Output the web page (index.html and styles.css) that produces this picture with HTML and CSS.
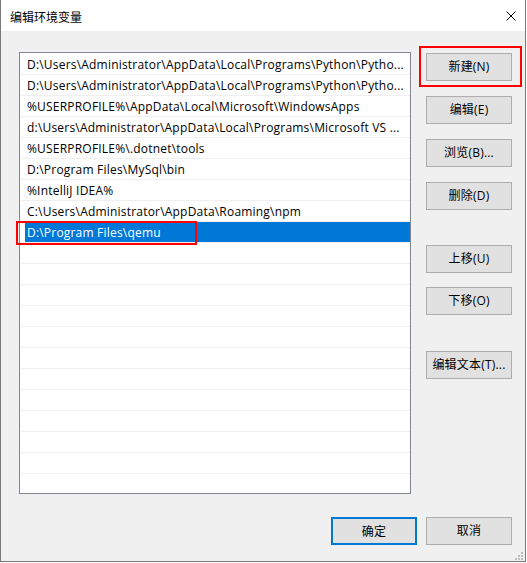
FILE: index.html
```html
<!DOCTYPE html>
<html lang="zh-CN">
<head>
<meta charset="utf-8">
<title>编辑环境变量</title>
<link rel="stylesheet" href="styles.css">
</head>
<body>
<div class="window">
  <div class="titlebar">
    <span class="title">编辑环境变量</span>
    <svg class="close" width="10" height="10" viewBox="0 0 10 10"><path d="M0.5 0.5 L9.5 9.5 M9.5 0.5 L0.5 9.5" stroke="#000" stroke-width="1" fill="none"/></svg>
  </div>
  <div class="content">
    <div class="main">
      <div class="list">
        <div class="row"><span class="label">D:\Users\Administrator\AppData\Local\Programs\Python\Pytho...</span></div>
        <div class="row"><span class="label">D:\Users\Administrator\AppData\Local\Programs\Python\Pytho...</span></div>
        <div class="row"><span class="label">%USERPROFILE%\AppData\Local\Microsoft\WindowsApps</span></div>
        <div class="row"><span class="label">d:\Users\Administrator\AppData\Local\Programs\Microsoft VS ...</span></div>
        <div class="row"><span class="label">%USERPROFILE%\.dotnet\tools</span></div>
        <div class="row"><span class="label">D:\Program Files\MySql\bin</span></div>
        <div class="row"><span class="label">%IntelliJ IDEA%</span></div>
        <div class="row"><span class="label">C:\Users\Administrator\AppData\Roaming\npm</span></div>
        <div class="row"><span class="label selected">D:\Program Files\qemu<span class="mark mark-row"></span></span></div>
        <div class="row"></div>
        <div class="row"></div>
        <div class="row"></div>
        <div class="row"></div>
        <div class="row"></div>
        <div class="row"></div>
        <div class="row"></div>
        <div class="row"></div>
        <div class="row"></div>
        <div class="row"></div>
        <div class="row"></div>
      </div>
      <div class="side">
        <div class="group group-a">
          <button class="btn btn-marked">新建(N)<span class="mark mark-btn"></span></button>
          <button class="btn">编辑(E)</button>
          <button class="btn">浏览(B)...</button>
          <button class="btn">删除(D)</button>
        </div>
        <div class="group group-b">
          <button class="btn">上移(U)</button>
          <button class="btn">下移(O)</button>
        </div>
        <div class="group group-c">
          <button class="btn">编辑文本(T)...</button>
        </div>
      </div>
    </div>
    <div class="footer">
      <button class="btn btn-default">确定</button>
      <button class="btn">取消</button>
    </div>
  </div>
  <svg class="grip" width="8" height="8" viewBox="0 0 8 8">
    <rect x="6" y="0" width="2" height="2" fill="#bdbdbd"/>
    <rect x="3" y="3" width="2" height="2" fill="#bdbdbd"/>
    <rect x="6" y="3" width="2" height="2" fill="#bdbdbd"/>
    <rect x="0" y="6" width="2" height="2" fill="#bdbdbd"/>
    <rect x="3" y="6" width="2" height="2" fill="#bdbdbd"/>
    <rect x="6" y="6" width="2" height="2" fill="#bdbdbd"/>
  </svg>
</div>
</body>
</html>
```
FILE: styles.css
```css
html, body {
  margin: 0;
  padding: 0;
  background: #ffffff;
}

body {
  width: 527px;
  height: 563px;
  font-family: "Open Sans", "Noto Sans CJK SC", sans-serif;
  font-size: 12px;
  color: #000;
}

.window {
  position: relative;
  width: 526px;
  height: 562px;
  box-sizing: border-box;
  border-left: 1px solid #7a7a7a;
  border-right: 1px solid #7a7a7a;
  border-bottom: 1px solid #7a7a7a;
  display: flex;
  flex-direction: column;
  background: #f0f0f0;
}

.titlebar {
  height: 31px;
  flex: none;
  background: #ffffff;
  display: flex;
  align-items: center;
  justify-content: space-between;
  padding: 0 9px 0 9px;
}

.title {
  font-family: "Noto Sans CJK SC", sans-serif;
  font-size: 12px;
  line-height: 14px;
  padding-top: 2px;
}

.close {
  display: block;
  margin-top: 0;
}

.content {
  flex: 1;
  padding: 21px 0 0 18px;
  display: flex;
  flex-direction: column;
}

.main {
  display: flex;
  align-items: flex-start;
}

.list {
  width: 392px;
  height: 442px;
  box-sizing: border-box;
  border: 1px solid #828790;
  background: #ffffff;
  padding-top: 1px;
}

.row {
  margin-left: 1px;
  height: 20px;
  border-bottom: 1px solid #efefef;
}

.label {
  position: relative;
  display: block;
  margin-left: 4px;
  padding-left: 2px;
  height: 19px;
  padding-top: 1px;
  line-height: 19px;
  white-space: nowrap;
  letter-spacing: 0.2px;
}

.label.selected {
  background: #0078d7;
  color: #ffffff;
}

.mark {
  position: absolute;
  box-sizing: border-box;
  border: 2px solid #f00;
  pointer-events: none;
}

.mark-row {
  left: -9px;
  top: -1px;
  width: 181px;
  height: 24px;
}

.side {
  margin-left: 15px;
  margin-top: 1px;
  width: 86px;
  display: flex;
  flex-direction: column;
}

.group {
  display: flex;
  flex-direction: column;
}

.group-a {
  gap: 15px;
}

.group-b {
  gap: 14px;
  margin-top: 35px;
}

.group-c {
  margin-top: 36px;
}

.btn {
  position: relative;
  width: 86px;
  height: 28px;
  box-sizing: border-box;
  margin: 0;
  padding: 0;
  background: #e1e1e1;
  border: 1px solid #adadad;
  border-radius: 0;
  font-family: "Open Sans", "Noto Sans CJK SC", sans-serif;
  font-size: 12px;
  letter-spacing: 0.2px;
  color: #000;
  line-height: 26px;
  text-align: center;
}

.btn-default {
  border: 2px solid #0078d7;
}

.mark-btn {
  left: -8px;
  top: -8px;
  width: 103px;
  height: 41px;
}

.footer {
  margin-top: 23px;
  display: flex;
  justify-content: flex-end;
  gap: 9px;
  padding-right: 13px;
}

.grip {
  position: absolute;
  right: 2px;
  bottom: 1px;
  display: block;
}
```
